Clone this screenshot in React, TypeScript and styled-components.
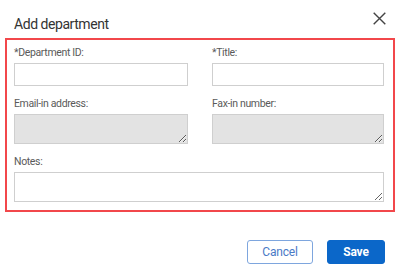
import React from "react";
import styled, { createGlobalStyle } from "styled-components";

const GlobalStyle = createGlobalStyle`
  html, body {
    margin: 0;
    padding: 0;
    background: #ffffff;
    font-family: Roboto, "Liberation Sans", Arial, sans-serif;
  }
`;

const Dialog = styled.div`
  width: 400px;
  height: 274px;
  box-sizing: border-box;
  padding: 11px 5px 0 5px;
  display: flex;
  flex-direction: column;
`;

const Header = styled.div`
  display: flex;
  align-items: flex-start;
  justify-content: space-between;
  padding: 0 9px 0 9px;
  height: 27px;
`;

const Title = styled.h2`
  margin: 3px 0 0 0;
  font-size: 14px;
  font-weight: 400;
  line-height: 20px;
  letter-spacing: -0.45px;
  color: #333333;
`;

const CloseButton = styled.button`
  border: none;
  background: none;
  padding: 0;
  margin: 0;
  width: 14px;
  height: 14px;
  display: flex;
  align-items: center;
  justify-content: center;
  cursor: pointer;
`;

const FormBox = styled.div`
  border: 2px solid #f2474b;
  padding: 6px 9px 8px 7px;
  display: grid;
  grid-template-columns: 174px 172px;
  column-gap: 24px;
  row-gap: 11px;
`;

const Field = styled.div<{ $wide?: boolean }>`
  display: flex;
  flex-direction: column;
  grid-column: ${(p) => (p.$wide ? "1 / span 2" : "auto")};
`;

const Label = styled.label`
  font-size: 10.5px;
  line-height: 14px;
  letter-spacing: -0.35px;
  color: #5a5a5a;
  margin-bottom: 3px;
`;

const TextInput = styled.input`
  box-sizing: border-box;
  height: 23px;
  border: 1px solid #cfcfcf;
  border-radius: 0;
  padding: 2px 4px;
  font-size: 12px;
  font-family: inherit;
  background: #ffffff;
  outline: none;
`;

const Area = styled.textarea<{ $disabled?: boolean }>`
  box-sizing: border-box;
  height: 30px;
  border: 1px solid #cfcfcf;
  border-radius: 0;
  padding: 2px 4px;
  font-family: inherit;
  font-size: 12px;
  resize: both;
  background: ${(p) => (p.$disabled ? "#e3e3e3" : "#ffffff")};
  outline: none;
  display: block;
  width: 100%;
`;

const Footer = styled.div`
  display: flex;
  justify-content: flex-end;
  gap: 14px;
  padding: 28px 10px 0 0;
`;

const Button = styled.button<{ $primary?: boolean }>`
  height: 24px;
  box-sizing: border-box;
  border-radius: 3px;
  font-family: inherit;
  font-size: 12px;
  letter-spacing: -0.2px;
  cursor: pointer;
  padding: 0;
  width: ${(p) => (p.$primary ? "58px" : "66px")};
  border: 1px solid ${(p) => (p.$primary ? "#0b67c9" : "#7ea6de")};
  background: ${(p) => (p.$primary ? "#0b67c9" : "#ffffff")};
  color: ${(p) => (p.$primary ? "#ffffff" : "#4a7ac6")};
  font-weight: ${(p) => (p.$primary ? 700 : 400)};
`;

function CloseIcon() {
  return (
    <svg width="13" height="13" viewBox="0 0 13 13">
      <path d="M0.7 0.7 L12.3 12.3 M12.3 0.7 L0.7 12.3" stroke="#444" strokeWidth="1.4" fill="none" />
    </svg>
  );
}

export default function App() {
  return (
    <>
      <GlobalStyle />
      <Dialog>
        <Header>
          <Title>Add department</Title>
          <CloseButton aria-label="Close">
            <CloseIcon />
          </CloseButton>
        </Header>
        <FormBox>
          <Field>
            <Label>*Department ID:</Label>
            <TextInput />
          </Field>
          <Field>
            <Label>*Title:</Label>
            <TextInput />
          </Field>
          <Field>
            <Label>Email-in address:</Label>
            <Area $disabled disabled />
          </Field>
          <Field>
            <Label>Fax-in number:</Label>
            <Area $disabled disabled />
          </Field>
          <Field $wide>
            <Label>Notes:</Label>
            <Area />
          </Field>
        </FormBox>
        <Footer>
          <Button>Cancel</Button>
          <Button $primary>Save</Button>
        </Footer>
      </Dialog>
    </>
  );
}
